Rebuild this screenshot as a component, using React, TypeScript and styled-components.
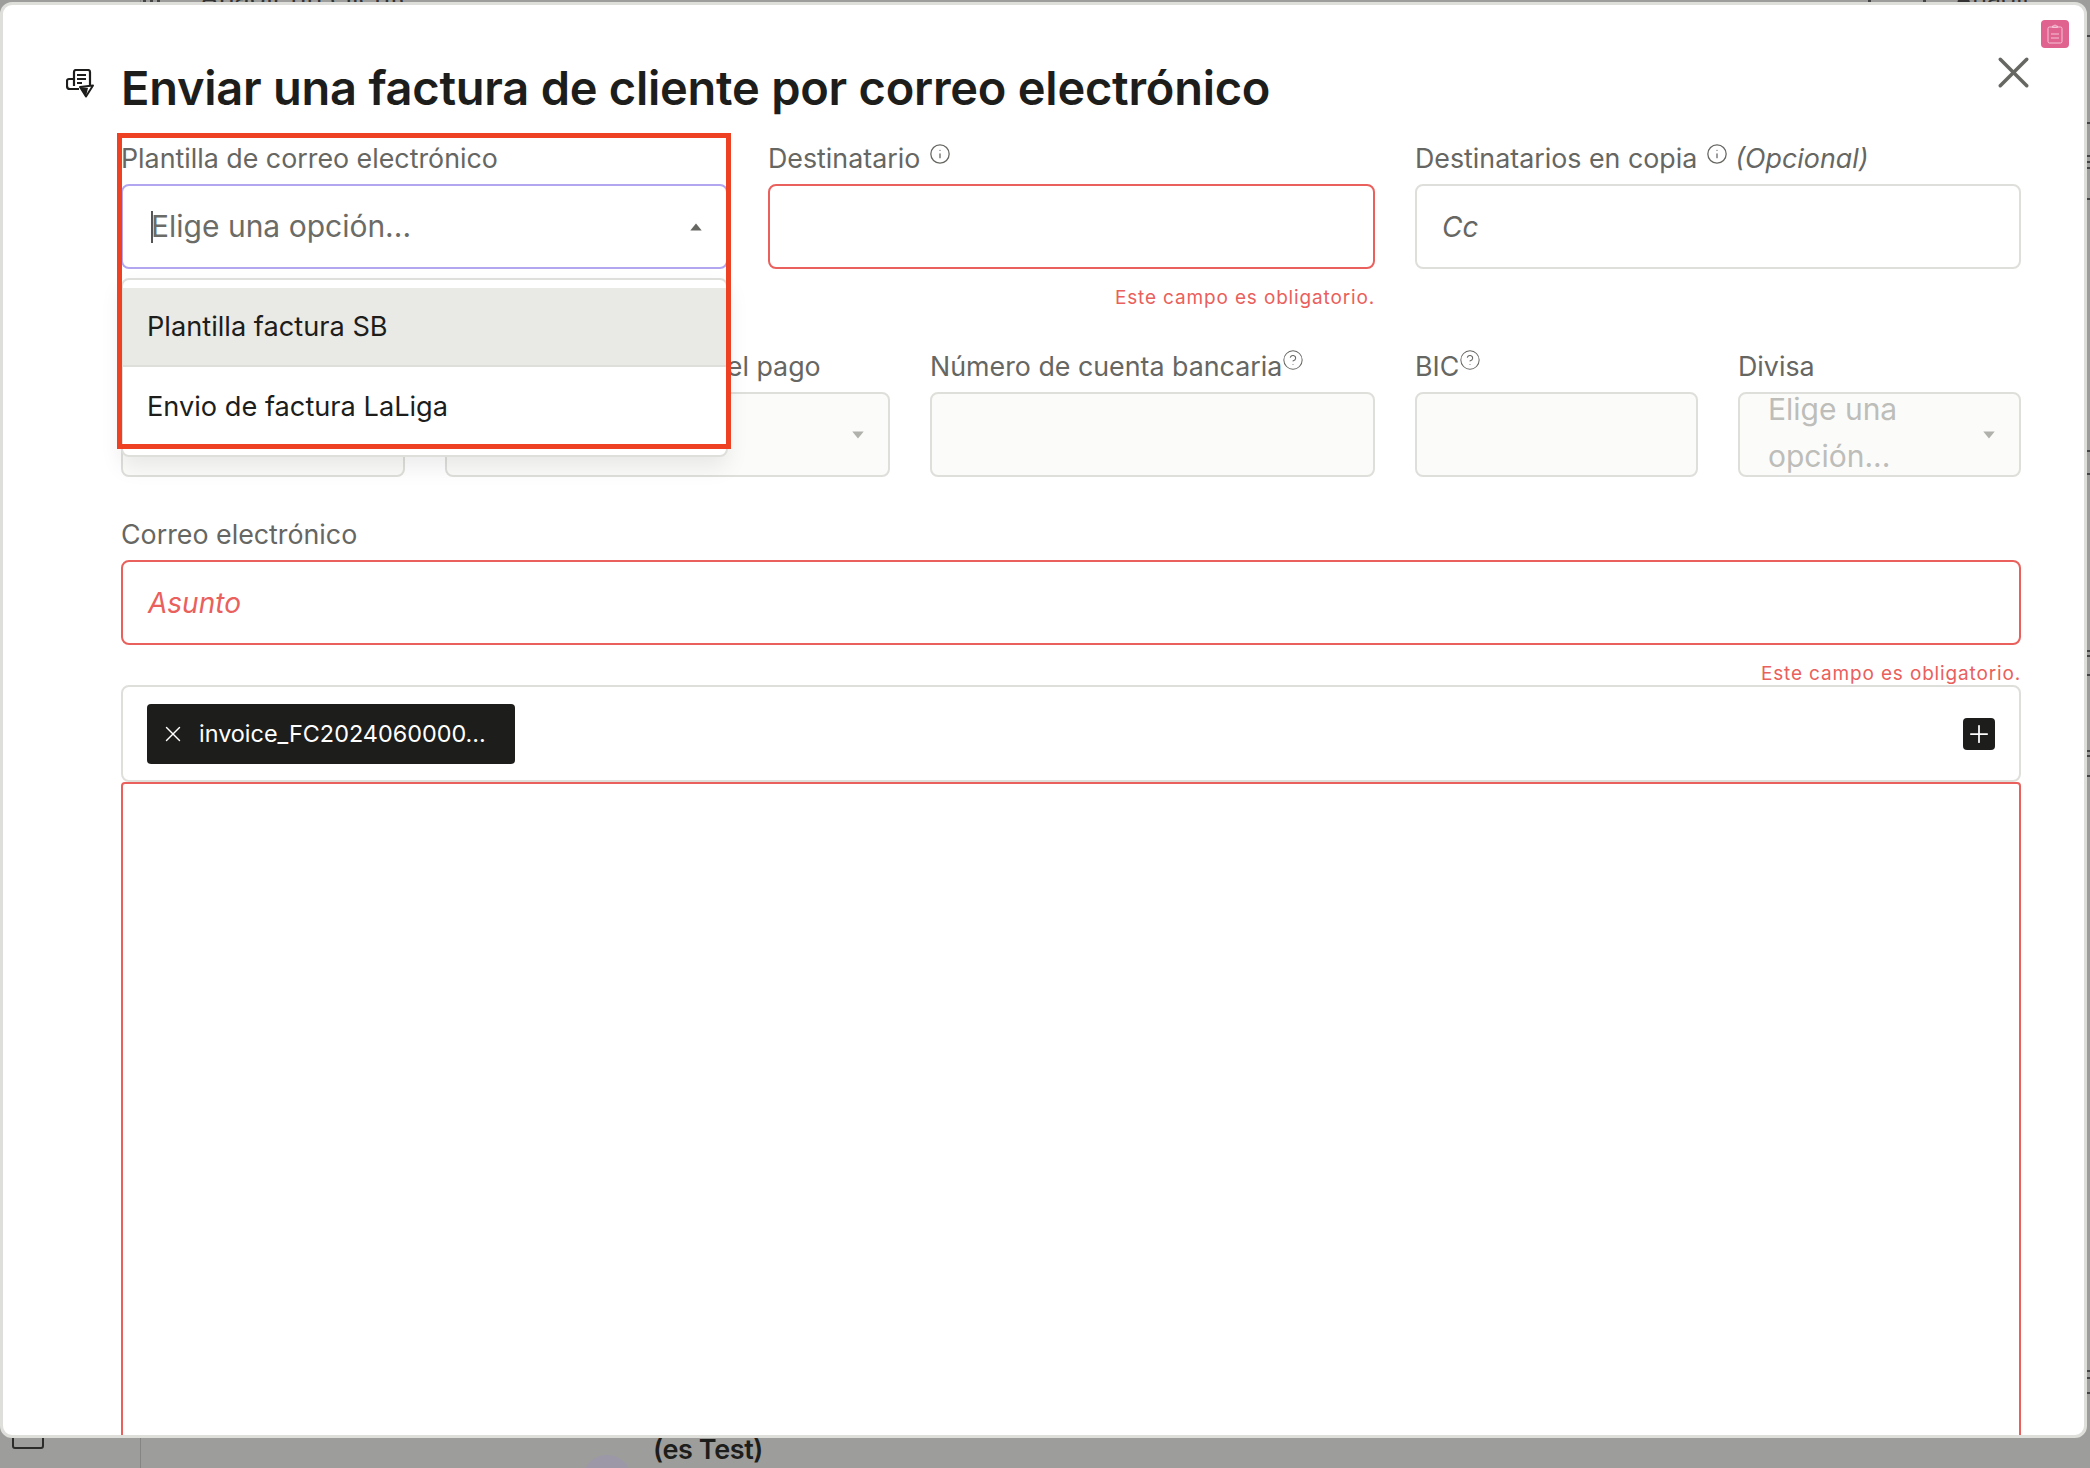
import { FunctionComponent, ReactNode } from "react";
import styled, { createGlobalStyle } from "styled-components";
import { Info, CircleHelp, Plus, X } from "lucide-react";

const FONT = `Inter, "Liberation Sans", sans-serif`;

const GlobalStyle = createGlobalStyle`
  html, body { margin: 0; padding: 0; background: #9d9d9b; }
  * { box-sizing: border-box; }
  body { font-family: ${FONT}; }
`;

const RAIL_MARKS = [35, 122, 155, 161, 167, 198, 450, 473, 650, 655, 674, 750, 755, 775, 1370, 1377, 1392];
const TOP_MARKS = [143, 150, 157, 1868, 1923];

const SendIcon = () => (
  <svg width="28" height="29" viewBox="0 0 28 29" fill="none">
    <path d="M8 17V3a2 2 0 0 1 2-2h12a2 2 0 0 1 2 2v13" stroke="#1d1d1b" strokeWidth="2.2" />
    <path d="M7 10H3a2 2 0 0 0-2 2v5a3 3 0 0 0 3 3h9" stroke="#1d1d1b" strokeWidth="2.2" />
    <path d="M11 6h9M11 10h9M11 14h5" stroke="#1d1d1b" strokeWidth="2" />
    <path d="M14 18l13-1.5-7 11z" fill="#fff" stroke="#1d1d1b" strokeWidth="2" strokeLinejoin="round" />
    <path d="M14 18l8 1-2 8.5z" fill="#1d1d1b" />
  </svg>
);

const ClipboardIcon = () => (
  <svg width="16" height="20" viewBox="0 0 16 20" fill="none" stroke="#f5c3d6" strokeWidth="1">
    <rect x="1" y="3" width="14" height="16" rx="1.5" />
    <path d="M5.5 3.5V2h1.5a1 1 0 0 1 2 0h1.5v1.5zM4 10h8M4 14h8" />
  </svg>
);

const Caret: FunctionComponent<{ up?: boolean; active?: boolean }> = ({ up, active }) => (
  <CaretSvg viewBox="0 0 10 7" $active={active}>
    <path d={up ? "M5 0.5L10 6.5H0z" : "M5 6.5L0 0.5H10z"} />
  </CaretSvg>
);

const Field: FunctionComponent<{ label?: ReactNode; error?: boolean; children: ReactNode }> = ({ label, error, children }) => (
  <FieldWrap>
    <Label>{label}</Label>
    {children}
    {error && <ErrorText>Este campo es obligatorio.</ErrorText>}
  </FieldWrap>
);

export default function App() {
  return (
    <Page>
      <GlobalStyle />
      <Backdrop>
        <BackTitle>Añadir un cliente...</BackTitle>
        <BackAction>Añadir</BackAction>
        {TOP_MARKS.map(left => <TopMark key={left} $left={left} />)}
        <SideLine />
        <SideIcon />
        <Avatar />
        <BackName>(es Test)</BackName>
        {RAIL_MARKS.map(top => <RailMark key={top} $top={top} />)}
      </Backdrop>

      <Modal>
        <Badge><ClipboardIcon /></Badge>
        <CloseButton>
          <X size={53} strokeWidth={1.6} color="#666662" />
        </CloseButton>

        <Header>
          <HeaderIcon><SendIcon /></HeaderIcon>
          <Title>Enviar una factura de cliente por correo electrónico</Title>
        </Header>

        <Form>
          <TopRow>
            <Field label="Plantilla de correo electrónico">
              <Control $state="focus">
                <Cursor />
                <SelectText>Elige una opción...</SelectText>
                <Caret up active />
              </Control>
              <Dropdown>
                <Option $selected>Plantilla factura SB</Option>
                <Option>Envio de factura LaLiga</Option>
              </Dropdown>
            </Field>
            <Field label={<>Destinatario <InfoMark><Info size={22} strokeWidth={1.4} /></InfoMark></>} error>
              <Control $state="error" />
            </Field>
            <Field label={<>Destinatarios en copia <InfoMark><Info size={22} strokeWidth={1.4} /></InfoMark> <em>(Opcional)</em></>}>
              <Control>
                <Placeholder>Cc</Placeholder>
              </Control>
            </Field>
          </TopRow>

          <MiddleRow>
            <Field label="Fecha">
              <Control $state="disabled" />
            </Field>
            <Field label="Método para efectuar el pago">
              <Control $state="disabled">
                <Spacer />
                <Caret />
              </Control>
            </Field>
            <Field label={<>Número de cuenta bancaria<HelpMark><CircleHelp size={22} strokeWidth={1.1} /></HelpMark></>}>
              <Control $state="disabled" />
            </Field>
            <Field label={<>BIC<HelpMark><CircleHelp size={22} strokeWidth={1.1} /></HelpMark></>}>
              <Control $state="disabled" />
            </Field>
            <Field label="Divisa">
              <Control $state="disabled">
                <WrappedValue>Elige una opción...</WrappedValue>
                <Caret />
              </Control>
            </Field>
          </MiddleRow>

          <SubjectRow>
            <Field label="Correo electrónico" error>
              <Control $state="error">
                <Placeholder $error>Asunto</Placeholder>
              </Control>
            </Field>
          </SubjectRow>

          <Attachments>
            <Chip>
              <X size={26} strokeWidth={1.3} color="#fff" />
              <ChipName>invoice_FC2024060000...</ChipName>
            </Chip>
            <AddButton><Plus size={28} strokeWidth={1.5} color="#fff" /></AddButton>
          </Attachments>

          <Editor />
        </Form>
      </Modal>

      <Highlight />
    </Page>
  );
}

const Page = styled.div`
  position: relative;
  width: 2090px;
  height: 1468px;
  overflow: hidden;
  background: #9d9d9b;
`;

const Backdrop = styled.div`
  position: absolute;
  inset: 0;
`;

const BackTitle = styled.div`
  position: absolute;
  left: 200px;
  top: -14px;
  font-size: 27px;
  line-height: 24px;
  color: #333;
`;

const BackAction = styled.div`
  position: absolute;
  left: 1955px;
  top: -14px;
  font-size: 25px;
  line-height: 24px;
  color: #333;
`;

const TopMark = styled.div<{ $left: number }>`
  position: absolute;
  left: ${p => p.$left}px;
  top: 0;
  width: 3px;
  height: 3px;
  background: #444;
`;

const SideLine = styled.div`
  position: absolute;
  left: 140px;
  top: 0;
  bottom: 0;
  width: 1px;
  background: #858583;
`;

const SideIcon = styled.div`
  position: absolute;
  left: 12px;
  top: 1425px;
  width: 32px;
  height: 24px;
  border: 2px solid #2b2b2a;
  border-radius: 3px;
`;

const Avatar = styled.div`
  position: absolute;
  left: 583px;
  top: 1455px;
  width: 48px;
  height: 48px;
  border-radius: 50%;
  background: #9c98a8;
`;

const BackName = styled.div`
  position: absolute;
  left: 653px;
  top: 1434px;
  font-size: 27px;
  line-height: 32px;
  font-weight: 600;
  letter-spacing: -0.4px;
  color: #1d1d1b;
`;

const RailMark = styled.div<{ $top: number }>`
  position: absolute;
  right: 0;
  top: ${p => p.$top}px;
  width: 3px;
  height: 2px;
  background: #444;
`;

const Modal = styled.div`
  position: absolute;
  left: 0;
  top: 2px;
  width: 2087px;
  height: 1436px;
  background: #fff;
  border: 3px solid #dededa;
  border-radius: 12px;
  overflow: hidden;
`;

const Badge = styled.div`
  position: absolute;
  left: 2038px;
  top: 15px;
  width: 28px;
  height: 28px;
  border-radius: 4px;
  background: #e0628f;
  display: flex;
  align-items: center;
  justify-content: center;
`;

const CloseButton = styled.div`
  position: absolute;
  left: 1984px;
  top: 41px;
  display: flex;
`;

const Header = styled.div`
  display: flex;
  align-items: center;
  height: 135px;
  padding: 31px 0 0 63px;
`;

const HeaderIcon = styled.div`
  width: 55px;
  display: flex;
  margin-top: -10px;
`;

const Title = styled.h1`
  margin: 0;
  font-size: 47px;
  line-height: 56px;
  font-weight: 600;
  letter-spacing: -0.25px;
  color: #1d1d1b;
  white-space: nowrap;
`;

const Form = styled.div`
  width: 1900px;
  margin-left: 118px;
`;

const TopRow = styled.div`
  display: grid;
  grid-template-columns: 607px 607px 606px;
  column-gap: 40px;
`;

const MiddleRow = styled.div`
  display: grid;
  grid-template-columns: 284px 445px 445px 283px 283px;
  column-gap: 40px;
  margin-top: 39px;
`;

const SubjectRow = styled.div`
  margin-top: 39px;
`;

const FieldWrap = styled.div`
  position: relative;
  min-width: 0;
`;

const Label = styled.label`
  display: block;
  height: 44px;
  padding-top: 1px;
  font-size: 26.8px;
  line-height: 34px;
  color: #666662;
  white-space: nowrap;

  em {
    font-style: italic;
  }
`;

const InfoMark = styled.span`
  display: inline-flex;
  vertical-align: 3px;
  margin-left: 1px;
`;

const HelpMark = styled.span`
  display: inline-flex;
  vertical-align: 5px;
`;

const stateBorder: Record<string, string> = {
  focus: "#b3a6f0",
  error: "#e9605c",
  disabled: "#dededa",
  idle: "#dededa",
};

const Control = styled.div<{ $state?: string }>`
  display: flex;
  align-items: center;
  height: 85px;
  padding: 0 24px 0 28px;
  border: 2px solid ${p => stateBorder[p.$state || "idle"]};
  border-radius: 8px;
  background: ${p => (p.$state === "disabled" ? "#fbfbf9" : "#fff")};
`;

const Cursor = styled.div`
  width: 2px;
  height: 32px;
  background: #555;
  margin-right: -2px;
`;

const SelectText = styled.div`
  flex: 1;
  font-size: 30px;
  padding-bottom: 2px;
  color: #6b6b67;
`;

const CaretSvg = styled.svg<{ $active?: boolean }>`
  flex: none;
  width: 12px;
  height: 8px;
  fill: ${p => (p.$active ? "#666662" : "#b0b0ac")};
`;

const Spacer = styled.div`
  flex: 1;
`;

const WrappedValue = styled.div`
  flex: 1;
  margin-top: -3px;
  font-size: 30px;
  line-height: 47px;
  color: #bdbdb9;
`;

const Placeholder = styled.div<{ $error?: boolean }>`
  margin-left: -3px;
  font-size: 28px;
  font-style: italic;
  color: ${p => (p.$error ? "#e9605c" : "#666662")};
`;

const Dropdown = styled.div`
  position: absolute;
  left: 0;
  top: 138px;
  z-index: 2;
  width: 100%;
  height: 179px;
  padding-top: 8px;
  background: #fff;
  border: 2px solid #dededa;
  border-radius: 8px;
  box-shadow: 0 10px 22px rgba(0, 0, 0, 0.08);
`;

const Option = styled.div<{ $selected?: boolean }>`
  display: flex;
  align-items: center;
  height: 79px;
  padding-left: 24px;
  font-size: 27.2px;
  color: #1d1d1b;
  background: ${p => (p.$selected ? "#e9e9e5" : "#fff")};
  border-bottom: ${p => (p.$selected ? "2px solid #dededa" : "0")};
`;

const ErrorText = styled.div`
  margin-top: 17px;
  height: 23px;
  font-size: 19px;
  line-height: 23px;
  letter-spacing: 0.85px;
  text-align: right;
  color: #e9605c;
`;

const Attachments = styled.div`
  display: flex;
  align-items: center;
  justify-content: space-between;
  height: 97px;
  padding: 0 24px;
  border: 2px solid #dededa;
  border-radius: 8px;
`;

const Chip = styled.div`
  display: flex;
  align-items: center;
  gap: 13px;
  width: 368px;
  height: 60px;
  padding-left: 13px;
  border-radius: 4px;
  background: #1d1d1b;
`;

const ChipName = styled.span`
  font-size: 23.4px;
  color: #fff;
  white-space: nowrap;
`;

const AddButton = styled.div`
  display: flex;
  align-items: center;
  justify-content: center;
  width: 32px;
  height: 32px;
  border-radius: 4px;
  background: #1d1d1b;
`;

const Editor = styled.div`
  height: 700px;
  border: 2px solid #e9605c;
  border-radius: 4px 4px 0 0;
`;

const Highlight = styled.div`
  position: absolute;
  left: 117px;
  top: 133px;
  z-index: 3;
  width: 614px;
  height: 316px;
  border: 5px solid #ee4123;
  pointer-events: none;
`;
